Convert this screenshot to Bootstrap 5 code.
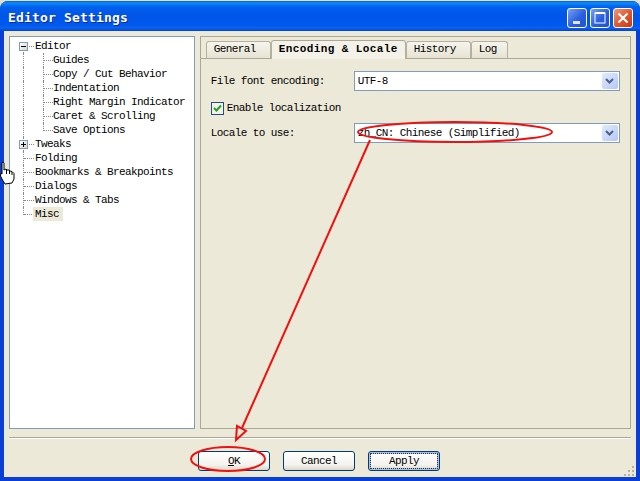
<!DOCTYPE html>
<html lang="en">
<head>
  <meta charset="UTF-8">
  <meta name="viewport" content="width=device-width, initial-scale=1.0">
  <title>Editor Settings</title>
  <link rel="stylesheet" href="https://cdn.jsdelivr.net/npm/bootstrap@5.3.0/dist/css/bootstrap.min.css">
  <style>
    html, body { height: 481px; overflow: hidden; }
    body {
      background: #e6dfd0;
      position: relative;
      font-family: "Liberation Mono", monospace;
      font-size: 11px;
      letter-spacing: -0.6px;
      line-height: 14px;
      color: #000;
    }
    .xp-window {
      height: 480px;
      margin-top: 1px;
      background: #0a3fd6;
      border-radius: 8px 8px 0 0;
      padding: 0 4px 4px;
    }
    .xp-title {
      height: 30px;
      margin: 0 -4px;
      padding: 3px 7px 0 8px;
      border-radius: 8px 8px 0 0;
      background: linear-gradient(#0a5fe0 0, #0a8bf8 2px, #0160ee 6px, #0055e8 14px, #0058ee 24px, #0a62f2 27px, #0043cf 30px);
    }
    .xp-caption {
      font-family: "DejaVu Sans Mono", monospace;
      font-size: 13px;
      font-weight: 700;
      letter-spacing: 0.17px;
      color: #fff;
      text-shadow: 1px 1px 0 #0b2d96;
    }
    .cap-btn {
      width: 20px;
      height: 20px;
      border: 1px solid #fff;
      border-radius: 3px;
      background: linear-gradient(135deg, #7aa2f5, #2a5fe0 55%, #2350d0);
    }
    .cap-close { background: linear-gradient(135deg, #eb9a7c, #e0552c 55%, #c23a15); }
    .cap-gap { gap: 3px; }
    .xp-client { background: #ece9d8; padding: 5px 5px 0; }
    .tree-box {
      width: 186px;
      height: 393px;
      background: #fff;
      border: 1px solid #7f9db9;
      padding-top: 2px;
    }
    .tree-row { position: relative; height: 14px; padding-left: 25px; white-space: nowrap; }
    .tree-sub { padding-left: 43px; }
    .tree-row::before {
      content: "";
      position: absolute;
      left: 14px;
      top: 7px;
      width: 10px;
      border-top: 1px dotted #888;
    }
    .tree-row::after {
      content: "";
      position: absolute;
      left: 13px;
      top: 0;
      height: 14px;
      border-left: 1px dotted #888;
    }
    .tree-sub::before { left: 34px; width: 9px; }
    .tree-last::after { height: 8px; }
    .tree-first::after { top: 8px; height: 6px; }
    .sub-line { position: absolute; left: 33px; top: 0; height: 14px; border-left: 1px dotted #888; }
    .sub-line-end { height: 8px; }
    .tree-selected { background: #ece9d8; padding: 0 4px 0 2px; margin-left: -2px; display: inline-block; height: 14px; position: relative; z-index: 1; }
    .tree-toggle {
      position: absolute;
      z-index: 1;
      left: 9px;
      top: 3px;
      width: 9px;
      height: 9px;
      border: 1px solid #7f9db9;
      background: linear-gradient(135deg, #fff, #d8d4c8);
    }
    .tree-toggle::before { content: ""; position: absolute; left: 1px; top: 3px; width: 5px; height: 1px; background: #000; }
    .toggle-plus::after { content: ""; position: absolute; left: 3px; top: 1px; width: 1px; height: 5px; background: #000; }
    .settings-box {
      width: 432px;
      height: 393px;
      margin-left: 5px;
      border: 1px solid #aca899;
    }
    .tab-strip { height: 22px; padding: 3px 0 0 5px; border-bottom: 1px solid #aca899; flex-wrap: nowrap; }
    .tab-strip .nav-link {
      height: 17px;
      margin-top: 1px;
      padding: 0 0 0 7px;
      color: #000;
      border: 1px solid #b5b19f;
      border-bottom: 0;
      border-radius: 3px 3px 0 0;
      background: linear-gradient(#f6f4ec, #e6e3d3);
    }
    .tab-strip .nav-link.active {
      height: 19px;
      margin-top: 0;
      padding-top: 1px;
      font-weight: 700;
      letter-spacing: 0.4px;
      background: #f4f2e8;
      border-top-color: #aca899;
      position: relative;
      z-index: 1;
    }
    .tab-general { width: 65px; }
    .tab-encoding { width: 135px; }
    .tab-history { width: 65px; }
    .tab-log { width: 37px; }
    .pane-body { padding: 12px 10px 0; }
    .field-row { height: 20px; }
    .field-label { width: 143px; }
    .combo {
      width: 266px;
      height: 20px;
      border: 1px solid #7f9db9;
      background: #fff;
      padding: 1px 1px 1px 3px;
    }
    .combo-arrow {
      width: 16px;
      height: 16px;
      border-radius: 2px;
      background: linear-gradient(135deg, #e2eafe, #b4c8f6);
    }
    .check-row { height: 14px; margin: 10px 0 8px; }
    .check-box {
      width: 13px;
      height: 13px;
      margin-right: 3px;
      border: 1px solid #1c5180;
      background: #f4f2e8;
    }
    .xp-rule { height: 2px; margin: 8px 0 0; border-top: 1px solid #aca899; border-bottom: 1px solid #fff; }
    .button-row { padding: 12px 0 0 189px; gap: 13px; position: relative; }
    .xp-btn {
      width: 72px;
      height: 20px;
      padding: 0;
      font-size: 11px;
      line-height: 18px;
      letter-spacing: -0.6px;
      color: #000;
      border: 1px solid #003c74;
      border-radius: 3px;
      background: linear-gradient(#fff, #f4f3ee 70%, #dcd8c8);
    }
    .xp-btn-focus { box-shadow: inset 0 0 0 2px #a9c0ea; outline: 1px dotted #333; outline-offset: -3px; }
    .size-grip { position: absolute; right: 0; bottom: 0; }
    .overlay { position: absolute; left: 0; top: 0; pointer-events: none; }
    .hand-cursor { position: absolute; left: 0; top: 161px; }
  </style>
</head>
<body>
  <div class="xp-window d-flex flex-column">
    <div class="xp-title d-flex align-items-center justify-content-between flex-shrink-0">
      <div class="xp-caption">Editor Settings</div>
      <div class="d-flex cap-gap">
        <div class="cap-btn d-flex align-items-end justify-content-center">
          <svg width="10" height="6" viewBox="0 0 10 6"><rect x="1" y="0" width="7" height="3" fill="#dbe6fb"/></svg>
        </div>
        <div class="cap-btn d-flex align-items-center justify-content-center">
          <svg width="14" height="14" viewBox="0 0 14 14"><rect x="2" y="2" width="10" height="10" fill="none" stroke="#fff" stroke-width="1"/><rect x="2" y="1" width="10" height="2" fill="#fff"/></svg>
        </div>
        <div class="cap-btn cap-close d-flex align-items-center justify-content-center">
          <svg width="12" height="12" viewBox="0 0 12 12"><path d="M1.5 1.5 L10.5 10.5 M10.5 1.5 L1.5 10.5" stroke="#fff" stroke-width="2.2"/></svg>
        </div>
      </div>
    </div>

    <div class="xp-client flex-grow-1 d-flex flex-column position-relative">
      <div class="d-flex">
        <ul class="tree-box list-unstyled mb-0">
          <li class="tree-row tree-first"><span class="tree-toggle"></span>Editor</li>
          <li class="tree-row tree-sub"><span class="sub-line"></span>Guides</li>
          <li class="tree-row tree-sub"><span class="sub-line"></span>Copy / Cut Behavior</li>
          <li class="tree-row tree-sub"><span class="sub-line"></span>Indentation</li>
          <li class="tree-row tree-sub"><span class="sub-line"></span>Right Margin Indicator</li>
          <li class="tree-row tree-sub"><span class="sub-line"></span>Caret &amp; Scrolling</li>
          <li class="tree-row tree-sub"><span class="sub-line sub-line-end"></span>Save Options</li>
          <li class="tree-row"><span class="tree-toggle toggle-plus"></span>Tweaks</li>
          <li class="tree-row">Folding</li>
          <li class="tree-row">Bookmarks &amp; Breakpoints</li>
          <li class="tree-row">Dialogs</li>
          <li class="tree-row">Windows &amp; Tabs</li>
          <li class="tree-row tree-last"><span class="tree-selected">Misc</span></li>
        </ul>

        <div class="settings-box">
          <nav class="nav tab-strip">
            <a class="nav-link tab-general" href="#">General</a>
            <a class="nav-link tab-encoding active" href="#">Encoding &amp; Locale</a>
            <a class="nav-link tab-history" href="#">History</a>
            <a class="nav-link tab-log" href="#">Log</a>
          </nav>
          <div class="pane-body">
            <div class="field-row d-flex align-items-center">
              <div class="field-label">File font encoding:</div>
              <div class="combo d-flex align-items-center justify-content-between">
                <span>UTF-8</span>
                <span class="combo-arrow d-flex align-items-center justify-content-center">
                  <svg width="9" height="7" viewBox="0 0 9 7"><path d="M1 1 L4.5 4.5 L8 1" fill="none" stroke="#4d6185" stroke-width="2"/></svg>
                </span>
              </div>
            </div>
            <div class="check-row d-flex align-items-center">
              <span class="check-box d-flex align-items-center justify-content-center">
                <svg width="9" height="9" viewBox="0 0 9 9"><path d="M1 4 L3.5 6.5 L8 1.5" fill="none" stroke="#21a121" stroke-width="2"/></svg>
              </span>
              <span>Enable localization</span>
            </div>
            <div class="field-row d-flex align-items-center">
              <div class="field-label">Locale to use:</div>
              <div class="combo d-flex align-items-center justify-content-between">
                <span>zh_CN: Chinese (Simplified)</span>
                <span class="combo-arrow d-flex align-items-center justify-content-center">
                  <svg width="9" height="7" viewBox="0 0 9 7"><path d="M1 1 L4.5 4.5 L8 1" fill="none" stroke="#4d6185" stroke-width="2"/></svg>
                </span>
              </div>
            </div>
          </div>
        </div>
      </div>

      <div class="xp-rule"></div>

      <div class="button-row d-flex flex-grow-1">
        <button type="button" class="btn xp-btn"><u>O</u>K</button>
        <button type="button" class="btn xp-btn">Cancel</button>
        <button type="button" class="btn xp-btn xp-btn-focus">Apply</button>
      </div>
      <svg class="size-grip" width="12" height="12" viewBox="0 0 12 12" fill="#b5b19f">
        <rect x="8" y="1" width="2" height="2"/><rect x="4" y="5" width="2" height="2"/><rect x="8" y="5" width="2" height="2"/>
        <rect x="0" y="9" width="2" height="2"/><rect x="4" y="9" width="2" height="2"/><rect x="8" y="9" width="2" height="2"/>
      </svg>
    </div>
  </div>

  <!-- hand cursor sitting on the window edge -->
  <svg class="hand-cursor" width="15" height="24" viewBox="0 0 15 24">
    <path d="M2 1.5 Q3.5 0.5 4 2 L4 9 L6 8 L7 9 L9 9 L10 10 L12 10.5 L14 12.5 L14 18 L12 22 L5 23 L2.5 19 L0.5 15 L1 12 L2 13 Z" fill="#fff" stroke="#000" stroke-width="1"/>
    <path d="M6.5 9 V13 M9.5 9.5 V13 M12 11 V14" stroke="#000" stroke-width="1" fill="none"/>
  </svg>

  <!-- red annotations -->
  <svg class="overlay" width="640" height="481" viewBox="0 0 640 481">
    <ellipse cx="455" cy="132" rx="97" ry="10" fill="none" stroke="#f01010" stroke-width="2"/>
    <ellipse cx="228" cy="459" rx="37" ry="12" fill="none" stroke="#f01010" stroke-width="2"/>
    <path d="M370 140 L242 428" fill="none" stroke="#f01010" stroke-width="2"/>
    <path d="M236 440 L237 426 L246 431 Z" fill="none" stroke="#f01010" stroke-width="2"/>
  </svg>
</body>
</html>
